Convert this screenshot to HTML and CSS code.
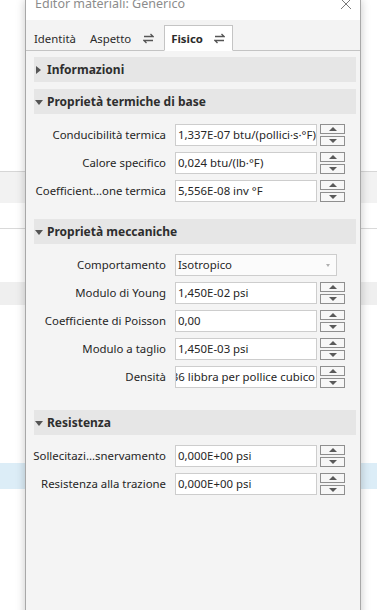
FILE: index.html
```html
<!DOCTYPE html>
<html lang="it">
<head>
    <meta charset="UTF-8">
    <meta name="viewport" content="width=device-width, initial-scale=1.0">
    <title>Editor materiali</title>
    <link rel="stylesheet" href="styles.css">
</head>
<body>
    <div id="dialog">
        <div class="titlebar">
            <span class="title">Editor materiali: Generico</span>
            <svg class="close" width="12" height="11" viewBox="0 0 12 11"><path d="M1 0 L11 10 M11 0 L1 10" stroke="#7a7a7a" stroke-width="1" fill="none"/></svg>
        </div>
        <div class="tabs">
            <span class="tab">Identità</span>
            <span class="tab">Aspetto <svg class="swap" width="11" height="11" viewBox="0 0 11 11"><path d="M1 3.5 H10 L7.5 1 M10 7.5 H1 L3.5 10" stroke="#555" stroke-width="1.3" fill="none"/></svg></span>
            <span class="tab active">Fisico <svg class="swap" width="11" height="11" viewBox="0 0 11 11"><path d="M1 3.5 H10 L7.5 1 M10 7.5 H1 L3.5 10" stroke="#555" stroke-width="1.3" fill="none"/></svg></span>
        </div>
        <div class="content">
            <div class="header closed"><span class="arrow"></span>Informazioni</div>

            <div class="header"><span class="arrow"></span>Proprietà termiche di base</div>
            <div class="props">
                <label>Conducibilità termica</label>
                <div class="field">1,337E-07 btu/(pollici·s·°F)</div>
                <div class="spin"><span class="up"></span><span class="down"></span></div>
                <label>Calore specifico</label>
                <div class="field">0,024 btu/(lb·°F)</div>
                <div class="spin"><span class="up"></span><span class="down"></span></div>
                <label>Coefficient...one termica</label>
                <div class="field">5,556E-08 inv °F</div>
                <div class="spin"><span class="up"></span><span class="down"></span></div>
            </div>

            <div class="header"><span class="arrow"></span>Proprietà meccaniche</div>
            <div class="props tall">
                <label>Comportamento</label>
                <div class="field select">Isotropico<span class="caret"></span></div>
                <label>Modulo di Young</label>
                <div class="field">1,450E-02 psi</div>
                <div class="spin"><span class="up"></span><span class="down"></span></div>
                <label>Coefficiente di Poisson</label>
                <div class="field">0,00</div>
                <div class="spin"><span class="up"></span><span class="down"></span></div>
                <label>Modulo a taglio</label>
                <div class="field">1,450E-03 psi</div>
                <div class="spin"><span class="up"></span><span class="down"></span></div>
                <label>Densità</label>
                <div class="field scrolled"><span>36 libbra per pollice cubico</span></div>
                <div class="spin"><span class="up"></span><span class="down"></span></div>
            </div>

            <div class="header"><span class="arrow"></span>Resistenza</div>
            <div class="props">
                <label>Sollecitazi...snervamento</label>
                <div class="field">0,000E+00 psi</div>
                <div class="spin"><span class="up"></span><span class="down"></span></div>
                <label>Resistenza alla trazione</label>
                <div class="field">0,000E+00 psi</div>
                <div class="spin"><span class="up"></span><span class="down"></span></div>
            </div>
        </div>
    </div>
</body>
</html>
```
FILE: styles.css
```css
body
{
    margin: 0;
    height: 610px;
    overflow: hidden;
    font-family: "Noto Sans", "Open Sans", sans-serif;
    font-size: 11.4px;
    color: #262626;
    background-color: #ffffff;
    background-image:
        linear-gradient(transparent 463px, #dcedf7 463px, #dcedf7 489px, transparent 489px),
        linear-gradient(transparent 282px, #efefef 282px, #efefef 305px, transparent 305px),
        linear-gradient(transparent 228px, #d9d9d9 228px, #d9d9d9 229px, transparent 229px),
        linear-gradient(transparent 171px, #d6d6d6 171px, #d6d6d6 172px, #f2f2f2 172px, #f2f2f2 203px, transparent 203px);
    background-repeat: no-repeat;
    background-size: 100% 100%;
}
#dialog
{
    margin-left: 25px;
    width: 334px;
    height: 640px;
    border-left: 1px solid #a8a8a8;
    border-right: 1px solid #a8a8a8;
    background-color: #f4f4f4;
    box-shadow: 0 0 9px rgba(0, 0, 0, 0.22);
}
.titlebar
{
    height: 20px;
    background-color: #ffffff;
    overflow: hidden;
    display: flex;
    justify-content: space-between;
    padding: 0 8px 0 9px;
}
.title
{
    font-size: 12.5px;
    line-height: 18px;
    margin-top: -5px;
    color: #8c8c8c;
}
.close
{
    margin-top: -1px;
}
.tabs
{
    height: 30px;
    display: flex;
    align-items: flex-end;
    padding-left: 2px;
    border-bottom: 1px solid #c4c4c4;
    background-color: #f3f3f3;
}
.tab
{
    height: 25px;
    display: flex;
    align-items: center;
    gap: 12px;
    padding: 0 6px;
    margin-bottom: -1px;
    margin-right: 2px;
    font-size: 11.4px;
    color: #2b2b2b;
}
.tab.active
{
    background-color: #ffffff;
    border: 1px solid #c4c4c4;
    border-bottom: 1px solid #ffffff;
    height: 24px;
    gap: 11px;
    margin-left: 2px;
    padding: 0 7px 0 6px;
    font-weight: bold;
}
.content
{
    padding: 6px 4px 0 8px;
}
.header
{
    height: 25px;
    display: flex;
    align-items: center;
    background-color: #e6e6e6;
    font-weight: bold;
    font-size: 12px;
    color: #2e2e2e;
    margin-bottom: 7px;
}
.arrow
{
    width: 0;
    height: 0;
    margin: 1px 4px 0 1px;
    border-left: 4px solid transparent;
    border-right: 4px solid transparent;
    border-top: 5px solid #555;
}
.header.closed .arrow
{
    margin: 0 6px 0 2px;
    border-top: 4px solid transparent;
    border-bottom: 4px solid transparent;
    border-left: 5px solid #555;
    border-right: 0;
}
.props
{
    display: grid;
    grid-template-columns: 132px 142px 19px;
    column-gap: 9px;
    row-gap: 6px;
    padding: 3px 0 10px;
    margin-top: -7px;
    padding-top: 10px;
    margin-bottom: 7px;
}
.props.tall
{
    margin-bottom: 12px;
}
.props label
{
    text-align: right;
    line-height: 22px;
    white-space: nowrap;
    margin-left: -6px;
}
.field
{
    height: 22px;
    box-sizing: border-box;
    border: 1px solid #cdcdcd;
    background-color: #ffffff;
    line-height: 20px;
    padding: 0 2px;
    white-space: nowrap;
    overflow: hidden;
}
.field.scrolled
{
    display: flex;
    justify-content: flex-end;
    padding: 0 1px 0 0;
}
.field.select
{
    grid-column: 2 / 4;
    width: 162px;
    position: relative;
    background-color: #fbfbfb;
}
.caret
{
    position: absolute;
    right: 6px;
    top: 9px;
    border-left: 2.5px solid transparent;
    border-right: 2.5px solid transparent;
    border-top: 3px solid #b0b0b0;
}
.spin
{
    margin-left: -6px;
    display: flex;
    flex-direction: column;
    gap: 2px;
}
.spin span
{
    height: 10px;
    box-sizing: border-box;
    border: 1px solid #8f8f8f;
    background-color: #f7f7f7;
    display: flex;
    align-items: center;
    justify-content: center;
}
.spin .up::after
{
    content: "";
    border-left: 4px solid transparent;
    border-right: 4px solid transparent;
    border-bottom: 4px solid #5a5a5a;
}
.spin .down::after
{
    content: "";
    border-left: 4px solid transparent;
    border-right: 4px solid transparent;
    border-top: 4px solid #5a5a5a;
}
```
